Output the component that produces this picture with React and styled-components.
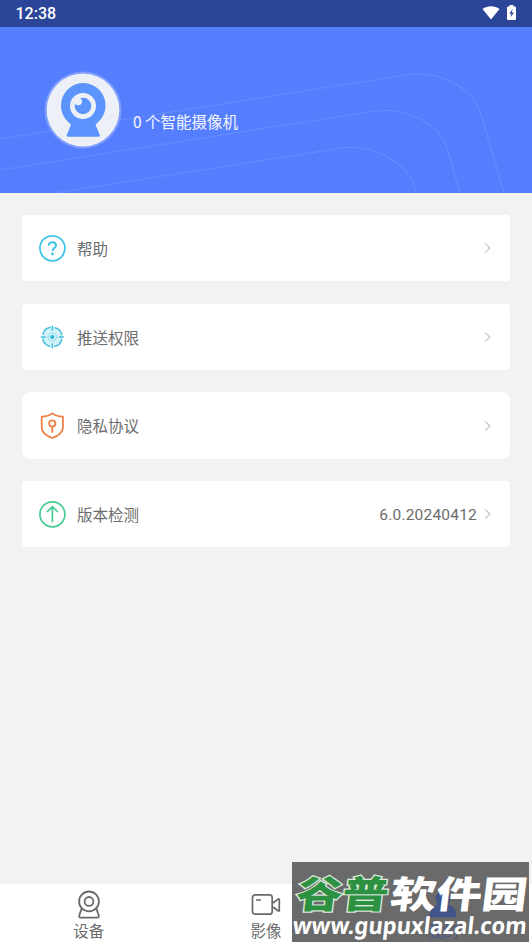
import React from "react";
import styled, { createGlobalStyle } from "styled-components";

const Global = createGlobalStyle`
  * { box-sizing: border-box; }
  body { margin: 0; background: #f2f2f2; }
`;
const Screen = styled.div`
  position: relative;
  width: 532px;
  height: 946px;
  display: flex;
  flex-direction: column;
  overflow: hidden;
  background: #f2f2f2;
  color: #6c6c6c;
  font-family: Roboto, "Noto Sans CJK SC", sans-serif;
  font-size: 15.5px;
`;
const StatusBar = styled.header`
  height: 27px;
  flex: none;
  display: flex;
  align-items: center;
  justify-content: space-between;
  padding: 0 16px 0 15.5px;
  background: #2b4699;
  color: #fff;
  font-size: 16px;
  font-weight: 500;
`;
const StatusIcons = styled.div`
  display: flex;
  align-items: center;
  gap: 7px;
  margin-bottom: 2px;
`;
const Profile = styled.section`
  position: relative;
  height: 166px;
  flex: none;
  display: flex;
  align-items: flex-start;
  gap: 11px;
  padding: 44px 0 0 44px;
  background: #557eff;
`;
const Waves = styled.svg`
  position: absolute;
  inset: 0;
`;
const Avatar = styled.svg`
  position: relative;
  flex: none;
`;
const CameraCount = styled.div`
  position: relative;
  margin-top: 38px;
  line-height: 24px;
  color: #f4f7ff;
  font-family: "Noto Sans CJK SC", sans-serif;
  font-size: 15.5px;
`;
const Menu = styled.main`
  flex: 1;
  display: flex;
  flex-direction: column;
  gap: 22.3px;
  padding: 22px 22px 0;
`;
const Row = styled.div`
  height: 66.4px;
  display: flex;
  align-items: center;
  padding: 0 17px 0 16px;
  border-radius: ${(p) => p.$radius || 4}px;
  background: #fff;
`;
const RowLabel = styled.span`
  flex: 1;
  margin-left: 11px;
  line-height: 24px;
  padding-top: 3.4px;
`;
const RowValue = styled.span`
  margin-right: 6px;
  padding-top: 2px;
  letter-spacing: 0.2px;
`;
const TabBar = styled.nav`
  height: 62px;
  flex: none;
  display: grid;
  grid-template-columns: repeat(3, 1fr);
  background: #fff;
`;
const Tab = styled.div`
  position: relative;
  z-index: ${(p) => (p.$active ? 2 : 0)};
  display: flex;
  flex-direction: column;
  align-items: center;
  padding-top: 5px;
  color: ${(p) => (p.$active ? "#4c5a82" : "#6c6c6c")};
  line-height: 24px;
`;
const Stamp = styled.div`
  position: absolute;
  left: 292px;
  top: 862px;
  z-index: 1;
  width: 237px;
  height: 80px;
  background: #6a6a6a;
`;
const StampText = styled.svg`
  position: absolute;
  left: 292px;
  top: 862px;
  z-index: 3;
  overflow: visible;
`;

const Chevron = () => (
  <svg width="10" height="14" viewBox="0 0 10 14" fill="none" stroke="#c2c2c2" strokeWidth="1.1">
    <path d="M2.2 2.400 6.900 7 2.200 11.600" />
  </svg>
);
const HelpIcon = () => (
  <svg width="28" height="28" viewBox="0 0 28 28" fill="none" stroke="#3fc3e6" strokeWidth="1.7">
    <circle cx="14.4" cy="14.300" r="12.500" />
    <path d="M10.800 11.800c0-2.300 1.500-3.500 3.600-3.500s3.500 1.300 3.500 3.200c0 2.700-3.400 2.800-3.400 5.500" strokeWidth="2" />
    <circle cx="14.500" cy="20" r="1.400" fill="#3fc3e6" stroke="none" />
  </svg>
);
const TargetIcon = () => (
  <svg width="28" height="28" viewBox="0 0 28 28" fill="none" stroke="#45bfdd">
    <circle cx="14.300" cy="14" r="10" fill="#d3f3fb" stroke="none" />
    <circle cx="14.300" cy="14" r="9.800" strokeWidth="1.500" strokeDasharray="11.400 4" strokeDashoffset="-2" />
    <path d="M14.300 2.500v5M14.300 20.500v5M2.800 14h5M20.800 14h5" strokeWidth="1.400" />
    <circle cx="14.300" cy="14" r="4.200" strokeWidth=".8" stroke="#7bd3e8" />
    <circle cx="14.300" cy="14" r="2.100" fill="#2bb5d8" stroke="none" />
  </svg>
);
const ShieldIcon = () => (
  <svg width="28" height="28" viewBox="0 0 28 28" fill="none" stroke="#f08146" strokeWidth="1.8">
    <path d="M14.300 1.400c3 2.300 6.400 3.200 10.600 3.300v11c0 5.100-4.600 8-10.600 10.300-6-2.300-10.600-5.200-10.600-10.300v-11C7.900 4.600 11.300 3.700 14.300 1.400Z" strokeLinejoin="round" />
    <circle cx="14.300" cy="11.400" r="3.100" />
    <path d="M14.300 14.600v6" />
  </svg>
);
const UpdateIcon = () => (
  <svg width="28" height="28" viewBox="0 0 28 28" fill="none" stroke="#45cc93" strokeWidth="1.7">
    <circle cx="14.400" cy="14.300" r="12.500" />
    <path d="M14.400 22.300V7M9 12l5.400-5.400L19.800 12" />
  </svg>
);
const CameraIcon = () => (
  <svg width="30" height="31" viewBox="0 0 30 31" fill="none" stroke="#6a6a6a" strokeWidth="1.800">
    <circle cx="15" cy="12.400" r="9.900" />
    <circle cx="15" cy="12.400" r="4.400" />
    <path d="M7.600 19.600 5.300 26.200c-.5 1.600.1 2.500 1.700 2.500h16c1.600 0 2.200-.9 1.700-2.500l-2.300-6.600" />
  </svg>
);
const VideoIcon = () => (
  <svg width="30" height="31" viewBox="0 0 30 31" fill="none" stroke="#6a6a6a" strokeWidth="1.700" strokeLinejoin="round">
    <rect x="1.500" y="5.800" width="19.700" height="19.400" rx="2.800" />
    <path d="M5 11h5M22 14l5-3.900h1.300v11.700H27L22 18" />
  </svg>
);
const PersonIcon = () => (
  <svg width="30" height="31" viewBox="0 0 30 31" fill="#425589">
    <path d="M15 2a7.400 7.400 0 0 1 7.400 7.400c0 2.800-1.300 4.500-2.600 6 4.700 1.100 7.900 4 8.700 10.400q.3 2.800-2.300 2.800H3.800q-2.600 0-2.300-2.800c.8-6.400 4-9.300 8.700-10.400-1.300-1.500-2.600-3.200-2.600-6A7.400 7.400 0 0 1 15 2Z" />
  </svg>
);

const items = [
  { label: "帮助", Icon: HelpIcon },
  { label: "推送权限", Icon: TargetIcon },
  { label: "隐私协议", Icon: ShieldIcon, radius: 8 },
  { label: "版本检测", Icon: UpdateIcon, value: "6.0.20240412" },
];

export default function App() {
  return (
    <Screen>
      <Global />
      <StatusBar>
        <span>12:38</span>
        <StatusIcons>
          <svg width="18" height="14" viewBox="0 0 18 14" fill="#fff">
            <path d="M.5 3C5.500-.6 12.500-.6 17.500 3L9 13.600Z" />
          </svg>
          <svg width="9" height="15" viewBox="0 0 9 15">
            <path d="M2.500 0h4v1.500H8q1 0 1 1V14q0 1-1 1H1q-1 0-1-1V2.500q0-1 1-1h1.500Z" fill="#fff" />
            <path d="M5.600 4 2.300 8.800h2L3.600 12.500 6.900 7.600H4.800Z" fill="#2b4699" />
          </svg>
        </StatusIcons>
      </StatusBar>
      <Profile>
        <Waves width="532" height="166" fill="none" stroke="#fff" strokeOpacity=".11" strokeWidth="1.100">
          <path d="M0 112 266 70 402 48.500C440 42 472 61 480 84L504 166" />
          <path d="M0 143 266 101 372 84.500C410 79 440 99 447 121L460 166" />
          <path d="M54 166 266 133 338 121.500C376 115 413 139 415.500 166" />
        </Waves>
        <Avatar width="78" height="78" viewBox="0 0 78 78">
          <circle cx="39" cy="39" r="38.500" fill="#7f9dfc" />
          <circle cx="39" cy="39" r="36.400" fill="#eef0f8" />
          <path d="M39 12a22.500 22.500 0 0 1 16 38.300l-3.500 3.500 4.200 10q.7 2-1.700 2H24.500q-2.400 0-1.700-2l4.200-10-3.500-3.500A22.500 22.500 0 0 1 39 12Z" fill="#5b94fc" />
          <circle cx="39" cy="35" r="13" fill="#eef0f8" />
          <circle cx="39" cy="35" r="8.300" fill="#5b94fc" />
          <circle cx="34.200" cy="30.500" r="3.800" fill="#eef0f8" />
        </Avatar>
        <CameraCount>0 个智能摄像机</CameraCount>
      </Profile>
      <Menu>
        {items.map(({ label, Icon, radius, value }) => (
          <Row key={label} $radius={radius}>
            <Icon />
            <RowLabel>{label}</RowLabel>
            {value && <RowValue>{value}</RowValue>}
            <Chevron />
          </Row>
        ))}
      </Menu>
      <TabBar>
        <Tab><CameraIcon />设备</Tab>
        <Tab><VideoIcon />影像</Tab>
        <Tab $active><PersonIcon />我的</Tab>
      </TabBar>
      <Stamp />
      <StampText width="237" height="80" fontWeight="900" fontFamily='"Noto Sans CJK SC", sans-serif'>
        <g transform="translate(3 45.500) skewX(-7)" fontSize="37.500">
          <text textLength="92" lengthAdjust="spacingAndGlyphs" fill="#2c9140" stroke="#dcebdd" strokeWidth="2.400" paintOrder="stroke">谷普</text>
          <text x="94" textLength="137" lengthAdjust="spacingAndGlyphs" fill="#fff">软件园</text>
        </g>
        <g transform="translate(0 71.500) skewX(-6)">
          <text fontFamily='"Noto Sans", sans-serif' fontWeight="700" fontSize="23.500" textLength="234" lengthAdjust="spacingAndGlyphs" fill="#fff">www.gupuxlazal.com</text>
        </g>
      </StampText>
    </Screen>
  );
}
